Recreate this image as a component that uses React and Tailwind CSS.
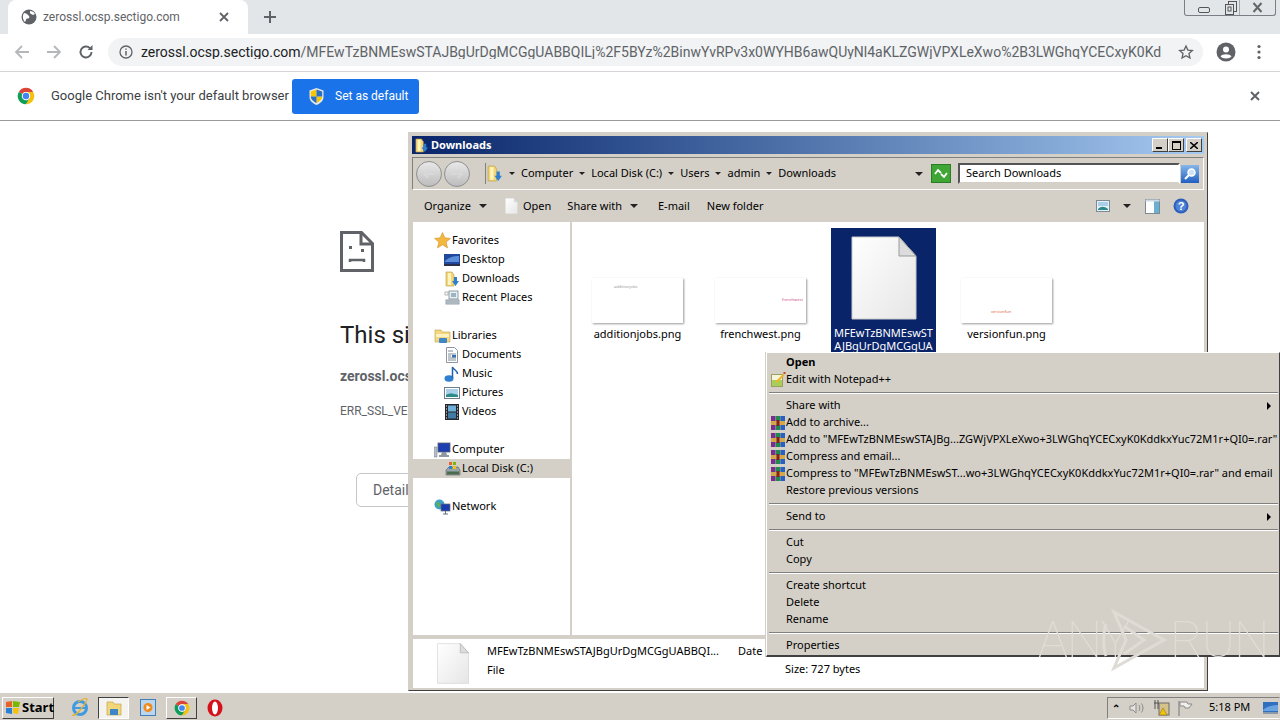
import React from "react";

const Folder = ({ size = 16 }) => (
  <svg width={size} height={size} viewBox="0 0 16 16" className="shrink-0">
    <path d="M2 1h6l2 3v11H2z" fill="#f3d677" stroke="#b89a3c" strokeWidth=".6" />
    <path d="M4 2h3v12H4z" fill="#fff3bf" />
    <path d="M10 6h3v4h2l-3.5 5L8 10h2z" fill="#2f7fd0" />
  </svg>
);
const Star = () => (
  <svg width="17" height="17" viewBox="0 0 16 16" className="shrink-0">
    <path d="M8 .5l2.2 5 5.3.5-4 3.5 1.2 5.5L8 12l-4.700 3 1.200-5.500-4-3.500 5.300-.5z" fill="#f4b73f" stroke="#c98a1d" strokeWidth=".5" />
  </svg>
);
const Desktop = () => (
  <svg width="16" height="16" viewBox="0 0 16 16" className="shrink-0">
    <rect x="0" y="2" width="16" height="12" fill="#22489c" />
    <path d="M1 9c4-4 9-5 14-5v6H1z" fill="#5a8ed8" />
    <rect x="0" y="12" width="16" height="2" fill="#2a2f4a" />
  </svg>
);
const Recent = () => (
  <svg width="16" height="16" viewBox="0 0 16 16" className="shrink-0">
    <rect x="5" y="1" width="9" height="8" fill="#e8eef2" stroke="#7b8a96" strokeWidth=".8" />
    <rect x="7" y="3" width="5" height="4" fill="#9db4c4" />
    <rect x="1" y="2" width="3" height="3" fill="#fff" stroke="#8a8a8a" strokeWidth=".6" />
    <rect x="2" y="10" width="13" height="4" fill="#cfd5da" stroke="#7b8a96" strokeWidth=".8" />
    <path d="M3 12h11" stroke="#7b8a96" strokeWidth=".8" />
  </svg>
);
const LibFolder = () => (
  <svg width="17" height="16" viewBox="0 0 17 16" className="shrink-0">
    <path d="M1 2h6l1 2h8v10H1z" fill="#f5d77f" stroke="#bd9f47" strokeWidth=".6" />
    <path d="M2 6h13v3H2z" fill="#fff2c2" />
    <rect x="5" y="10" width="8" height="5" rx="1" fill="#3f86c9" />
  </svg>
);
const Doc = () => (
  <svg width="16" height="16" viewBox="0 0 16 16" className="shrink-0">
    <path d="M2.500.5h8l3 3v12h-11z" fill="#fff" stroke="#8d96a0" />
    <path d="M4 4h5M4 7h8M4 9h3M4 11h8M4 13h8" stroke="#7d8b99" />
    <rect x="8" y="8" width="4" height="2.500" fill="#3a70b0" />
  </svg>
);
const Music = () => (
  <svg width="16" height="16" viewBox="0 0 16 16" className="shrink-0">
    <ellipse cx="5" cy="12.500" rx="4.500" ry="3.300" fill="#2f7fd0" />
    <path d="M8.500 12V1c1 3 5 3 5 7" fill="none" stroke="#1f63ae" strokeWidth="1.500" />
  </svg>
);
const Pictures = () => (
  <svg width="16" height="16" viewBox="0 0 16 16" className="shrink-0">
    <rect x=".5" y="2.500" width="15" height="11" fill="#fff" stroke="#6f7c89" />
    <rect x="2" y="4" width="12" height="8" fill="#a9d0e8" />
    <path d="M2 10c3-2 6-2 12 0v2H2z" fill="#2d8a8a" />
  </svg>
);
const Videos = () => (
  <svg width="16" height="16" viewBox="0 0 16 16" className="shrink-0">
    <rect x="1" y="0" width="14" height="16" fill="#24282e" />
    <rect x="4" y="1.500" width="8" height="6" fill="#6fb0d8" />
    <rect x="4" y="8.500" width="8" height="6" fill="#3f7ba3" />
    <path d="M2 2h1M2 5h1M2 8h1M2 11h1M2 14h1M13 2h1M13 5h1M13 8h1M13 11h1M13 14h1" stroke="#fff" />
  </svg>
);
const Computer = () => (
  <svg width="17" height="16" viewBox="0 0 17 16" className="shrink-0">
    <rect x="0" y="5" width="3" height="10" fill="#b7c0c8" stroke="#6e7882" strokeWidth=".5" />
    <rect x="4" y="1" width="12" height="9" fill="#1d3fb0" stroke="#5a6470" strokeWidth=".8" />
    <path d="M8 10h4l1 3H7z" fill="#8b96a0" />
    <path d="M5 14h10" stroke="#6e7882" strokeWidth="1.500" />
  </svg>
);
const Disk = () => (
  <svg width="17" height="16" viewBox="0 0 17 16" className="shrink-0">
    <path d="M2 9l3-3h9l2 3v5H2z" fill="#97a5a8" stroke="#505c60" strokeWidth=".6" />
    <rect x="3" y="10.500" width="12" height="3" fill="#4e6a4e" />
    <rect x="5" y="1" width="3" height="3" fill="#e8622a" />
    <rect x="9" y="1" width="3" height="3" fill="#7ab800" />
    <rect x="5" y="5" width="3" height="3" fill="#2c7fd6" />
    <rect x="9" y="5" width="3" height="3" fill="#f4c20d" />
  </svg>
);
const Network = () => (
  <svg width="17" height="16" viewBox="0 0 17 16" className="shrink-0">
    <circle cx="5.500" cy="5.500" r="5" fill="#3da0c8" />
    <path d="M2 3c2 1 3 0 4 2s-2 3-2 4" fill="#67b04a" />
    <rect x="7" y="5" width="9" height="7" fill="#1b3cb0" stroke="#66707a" strokeWidth=".7" />
    <path d="M11.500 12v3M9 15h5" stroke="#66707a" />
  </svg>
);
const Rar = () => (
  <svg width="14" height="14" viewBox="0 0 14 14" className="shrink-0">
    <rect x="0" y="0" width="4.500" height="14" fill="#7b2d8f" />
    <rect x="4.700" y="0" width="4.500" height="14" fill="#1f8a4c" />
    <rect x="9.400" y="0" width="4.600" height="14" fill="#2a5fc0" />
    <rect x="0" y="5" width="14" height="4" fill="#d2a94a" />
    <rect x="5.500" y="4" width="3" height="6" fill="#8b1f1f" />
  </svg>
);
const Note = () => (
  <svg width="15" height="15" viewBox="0 0 15 15" className="shrink-0">
    <rect x=".5" y="2.500" width="11" height="12" fill="#f3f6d8" stroke="#9aa060" />
    <rect x="1" y="8" width="10" height="6" fill="#a9cf5a" />
    <path d="M5 9l7-7 1.500 1.500-7 7H5z" fill="#f0b429" />
    <path d="M12.500 0h2v2h-2z" fill="#c04a1a" />
  </svg>
);
const PageIcon = ({ w, h, className = "" }) => (
  <svg width={w} height={h} viewBox="0 0 66 84" className={"shrink-0 " + className}>
    <defs>
      <linearGradient id="pageg" x1="0" y1="0" x2="1" y2="1">
        <stop offset="0" stopColor="#ffffff" />
        <stop offset="1" stopColor="#e6e6e6" />
      </linearGradient>
    </defs>
    <path d="M1 1h47l17 19v63H1z" fill="url(#pageg)" stroke="#c8c8c8" strokeWidth="1" />
    <path d="M48 1v19h17z" fill="#dcdcdc" stroke="#9b9b9b" strokeWidth="1" />
  </svg>
);

const NavRow = ({ icon, label, child, selected }) => (
  <div className={"h-[19px] flex items-center " + (child ? "pl-[29px] " : "pl-[19px] ") + (selected ? "bg-[#d4d0c8]" : "")}>
    <span className={"flex justify-center " + (child ? "w-[20px]" : "w-[20px]")}>{icon}</span>
    <span className={child ? "ml-0" : "ml-0"}>{label}</span>
  </div>
);

const Caret = ({ className = "" }) => (
  <span className={"inline-block w-0 h-0 border-l-[4px] border-r-[4px] border-t-[4px] border-l-transparent border-r-transparent border-t-[#222] " + className} />
);
const MiniCaret = () => <span className="inline-block w-0 h-0 mx-[6px] border-l-[3px] border-r-[3px] border-t-[3px] border-l-transparent border-r-transparent border-t-[#222]" />;

const Thumb = ({ text, color, cls }) => (
  <div className={"w-[91px] h-[45px] bg-white shadow-[1px_1px_2px_#9a9a9a] text-[4px] leading-[5px] whitespace-nowrap " + cls} style={{ color }}>
    {text}
  </div>
);

const Tile = ({ name, children }) => (
  <div className="w-[105px] flex flex-col items-center">
    <div className="h-[95px] flex items-end justify-center">{children}</div>
    <div className="mt-[4px] h-[13px] leading-[13px] text-center whitespace-nowrap">{name}</div>
  </div>
);

const MenuItem = ({ icon, label, bold, arrow }) => (
  <div className={"h-[17px] flex items-center relative " + (bold ? "font-bold" : "")}>
    <span className="w-[18px] pl-[3px] flex items-center shrink-0">{icon}</span>
    <span className="whitespace-nowrap">{label}</span>
    {arrow && (
      <span className="ml-auto mr-[8px] w-0 h-0 border-t-[4px] border-b-[4px] border-l-[4px] border-t-transparent border-b-transparent border-l-black" />
    )}
  </div>
);
const MenuSep = () => (
  <div className="h-[9px] flex flex-col justify-center px-[1px]">
    <div className="h-px bg-[#808080]" />
    <div className="h-px bg-white" />
  </div>
);

const Cell = ({ children, cls = "" }) => <span className={"flex items-center justify-center " + cls}>{children}</span>;

export default function App() {
  return (
    <div className="relative w-[1280px] h-[720px] overflow-hidden bg-white flex flex-col font-['Roboto',sans-serif] text-[#202124]">
      {/* Tab strip */}
      <div className="h-[34px] bg-[#e3e6e9] flex items-end pl-[8px] shrink-0 relative">
        <div className="w-[240px] h-[34px] bg-white rounded-t-[8px] flex items-center pl-[13px] pr-[10px]">
          <svg width="16" height="16" viewBox="0 0 16 16" className="shrink-0">
            <circle cx="8" cy="8" r="7.500" fill="#5f6368" />
            <path d="M3 4c2 0 3 1 4 2s2 2 1 3-3 0-3 2l-1 2C2 11 1 7 3 4zM9 2c2 0 4 1 5 3l-2 1c-1-1-3-1-3-2z" fill="#fff" />
          </svg>
          <span className="ml-[6px] text-[12px] leading-none text-[#5f6368] whitespace-nowrap w-[172px]">zerossl.ocsp.sectigo.com</span>
          <svg width="12" height="12" viewBox="0 0 12 12" className="ml-[3px]"><path d="M2 2l8 8M10 2l-8 8" stroke="#5f6368" strokeWidth="1.800" /></svg>
        </div>
        <svg width="14" height="14" viewBox="0 0 14 14" className="ml-[15px] mb-[10px]"><path d="M7 1v12M1 7h12" stroke="#5f6368" strokeWidth="2" /></svg>
        <div className="absolute right-[4px] top-0 w-[92px] h-[16px] border border-t-0 border-[#7b7f85] rounded-b-[3px] flex">
          <Cell cls="w-[37px]"><span className="w-[12px] h-[6px] rounded-[2px] border border-[#555] mt-[4px]" /></Cell>
          <Cell cls="w-[17px]">
            <svg width="12" height="14" viewBox="0 0 12 14"><rect x="3.500" y=".5" width="8" height="10" fill="none" stroke="#555" /><rect x=".5" y="3.500" width="8" height="10" fill="#e3e6e9" stroke="#555" /><rect x="3" y="6" width="3" height="4" fill="none" stroke="#555" /></svg>
          </Cell>
          <Cell cls="flex-1 border-l border-[#a8abaf]">
            <svg width="11" height="11" viewBox="0 0 11 11"><path d="M1.500 1l8 9M9.500 1l-8 9" stroke="#666" strokeWidth="2" fill="none" /></svg>
          </Cell>
        </div>
      </div>
      {/* Toolbar */}
      <div className="h-[38px] bg-white border-b border-[#d5d6d8] flex items-center shrink-0 pb-[1px]">
        <div className="w-[108px] flex items-center pl-[14px] gap-[16px] shrink-0">
          <svg width="16" height="16" viewBox="0 0 16 16"><path d="M15 8H2M8 2L2 8l6 6" fill="none" stroke="#b5b8bb" strokeWidth="1.800" /></svg>
          <svg width="16" height="16" viewBox="0 0 16 16"><path d="M1 8h13M8 2l6 6-6 6" fill="none" stroke="#b5b8bb" strokeWidth="1.800" /></svg>
          <svg width="16" height="16" viewBox="0 0 16 16"><path d="M13.500 8a5.500 5.500 0 1 1-1.600-3.900" fill="none" stroke="#5f6368" strokeWidth="1.900" /><path d="M14.500 1v5h-5z" fill="#5f6368" /></svg>
        </div>
        <div className="w-[1095px] h-[28px] rounded-full bg-[#f1f3f4] flex items-center pl-[11px] pr-[9px] shrink-0">
          <svg width="14" height="14" viewBox="0 0 14 14" className="shrink-0"><circle cx="7" cy="7" r="6" fill="none" stroke="#5f6368" strokeWidth="1.300" /><path d="M7 6v4.500M7 3.500v1.300" stroke="#5f6368" strokeWidth="1.500" /></svg>
          <span className="ml-[8px] text-[14px] whitespace-nowrap w-[1020px] overflow-hidden leading-none">
            zerossl.ocsp.sectigo.com<span className="text-[#5f6368]">/MFEwTzBNMEswSTAJBgUrDgMCGgUABBQILj%2F5BYz%2BinwYvRPv3x0WYHB6awQUyNl4aKLZGWjVPXLeXwo%2B3LWGhqYCECxyK0Kdd...</span>
          </span>
          <svg width="16" height="16" viewBox="0 0 24 24" className="ml-auto shrink-0"><path d="M12 3l2.800 6.200 6.700.7-5 4.500 1.400 6.600L12 17.600 6.100 21l1.400-6.600-5-4.500 6.700-.7z" fill="none" stroke="#5f6368" strokeWidth="2" /></svg>
        </div>
        <svg width="20" height="20" viewBox="0 0 20 20" className="ml-[13px] shrink-0"><circle cx="10" cy="10" r="9.500" fill="#5f6368" /><circle cx="10" cy="7.500" r="3" fill="#fff" /><path d="M4.500 14.500c1.500-3 9.500-3 11 0-2 2.500-9 2.500-11 0z" fill="#fff" /></svg>
        <svg width="4" height="16" viewBox="0 0 4 16" className="ml-[21px] shrink-0"><circle cx="2" cy="2.500" r="1.600" fill="#5f6368" /><circle cx="2" cy="8" r="1.600" fill="#5f6368" /><circle cx="2" cy="13.500" r="1.600" fill="#5f6368" /></svg>
      </div>
      {/* Infobar */}
      <div className="h-[49px] bg-white border-b border-[#9a9a9a] shadow-[0_1px_2px_#cfcfcf] flex items-center pl-[17px] shrink-0">
        <svg width="18" height="18" viewBox="0 0 24 24" className="shrink-0">
          <path d="M12 1a11 11 0 0 1 9.530 5.500H12a5.500 5.500 0 0 0-4.760 2.750L2.470 6.500A11 11 0 0 1 12 1z" fill="#db4437" />
          <path d="M21.530 6.500A11 11 0 0 1 12 23l4.760-8.250A5.500 5.500 0 0 0 12 6.500z" fill="#f4c20d" />
          <path d="M2.470 6.500A11 11 0 0 0 12 23l4.760-8.250a5.500 5.500 0 0 1-9.520-5.500z" fill="#0f9d58" />
          <circle cx="12" cy="12" r="5.500" fill="#fff" /><circle cx="12" cy="12" r="4.300" fill="#4285f4" />
        </svg>
        <span className="ml-[16px] text-[13px] text-[#3c4043] whitespace-nowrap w-[241px]">Google Chrome isn't your default browser</span>
        <div className="w-[127px] h-[35px] bg-[#1a73e8] rounded-[3px] flex items-center pl-[17px] text-white text-[12px] shrink-0">
          <svg width="15" height="17" viewBox="0 0 15 17" className="shrink-0">
            <path d="M7.500 0L14.500 2.500V9c0 4-3.500 6.500-7 8-3.500-1.500-7-4-7-8V2.500z" fill="#e8e8e8" />
            <path d="M7.500 1.500v7H1.800V3.500zM7.500 8.500h5.700c0 3-2.700 5-5.700 6.500z" fill="#f6c700" />
            <path d="M7.500 1.500l5.700 2v5H7.500zM7.500 8.500V15c-3-1.500-5.700-3.500-5.700-6.500z" fill="#2a6fc4" />
          </svg>
          <span className="ml-[11px]">Set as default</span>
        </div>
        <svg width="10" height="10" viewBox="0 0 10 10" className="ml-auto mr-[20px]"><path d="M1 1l8 8M9 1L1 9" stroke="#5f6368" strokeWidth="2" /></svg>
      </div>
      {/* Error page */}
      <div className="flex-1 pl-[340px] pt-[110px] bg-white min-h-0">
        <svg width="34" height="41" viewBox="0 0 34 41" className="block">
          <path d="M1.500 1.500h20l11 11v27h-31z" fill="none" stroke="#5f6368" strokeWidth="3" />
          <path d="M21 2v11h11" fill="none" stroke="#5f6368" strokeWidth="3" />
          <path d="M9 15h3v3H9zM21 18h3v3h-3z" fill="#5f6368" />
          <path d="M10 31v-2h14v2" fill="none" stroke="#5f6368" strokeWidth="2.500" />
        </svg>
        <div className="mt-[47px] text-[24px] leading-[32px] text-[#202124] whitespace-nowrap">This site can't provide a secure connection</div>
        <div className="mt-[15px] text-[14px] leading-[20px] font-bold text-[#5f6368] whitespace-nowrap">zerossl.ocsp.sectigo.com</div>
        <div className="mt-[17px] text-[12px] leading-[16px] text-[#5f6368] whitespace-nowrap">ERR_SSL_VERSION_OR_CIPHER_MISMATCH</div>
        <div className="mt-[54px] ml-[16px] w-[100px] h-[34px] border border-[#c4c7c9] rounded-[5px] flex items-center pl-[16px] text-[14px] text-[#5f6368]">Details</div>
      </div>
      {/* Taskbar */}
      <div className="h-[28px] bg-[#d4d0c8] border-t border-white flex items-center shrink-0 text-[11px] text-black font-['Noto_Sans',sans-serif]">
        <div className="ml-[2px] w-[52px] h-[22px] mt-[2px] border border-[#fff] border-r-[#404040] border-b-[#404040] flex items-center pl-[2px] font-bold text-[13px] shrink-0">
          <svg width="16" height="15" viewBox="0 0 16 15" className="shrink-0">
            <path d="M1 2l6-1v6H1z" fill="#e8622a" /><path d="M8 1l7 1-1 5H8z" fill="#7ab800" /><path d="M1 8h6v6l-6-1z" fill="#2c7fd6" /><path d="M8 8h6l-1 6-5-1z" fill="#f4c20d" />
          </svg>
          <span className="ml-px">Start</span>
        </div>
        <svg width="18" height="19" viewBox="0 0 18 19" className="ml-[17px] mt-[2px] shrink-0">
          <circle cx="9" cy="10" r="6.500" fill="none" stroke="#3f9ae0" strokeWidth="3" />
          <path d="M4 10h10" stroke="#3f9ae0" strokeWidth="2" /><path d="M1 17c2 1 6-2 9-6s7-9 6-10-5 0-9 3" fill="none" stroke="#e4b23a" strokeWidth="1.300" />
        </svg>
        <div className="ml-[9px] w-[31px] h-[22px] mt-[2px] bg-[#f4f3f0] border border-[#404040] border-r-white border-b-white flex items-center justify-center shrink-0">
          <svg width="16" height="16" viewBox="0 0 16 16"><path d="M1 2h6l1 2h7v11H1z" fill="#f3d677" stroke="#b89a3c" strokeWidth=".6" /><rect x="4" y="9" width="8" height="6" fill="#3f86c9" /></svg>
        </div>
        <svg width="16" height="17" viewBox="0 0 16 17" className="ml-[11px] mt-[2px] shrink-0">
          <rect x=".5" y=".5" width="15" height="16" fill="#bcd5ea" stroke="#3f7fbb" /><circle cx="8" cy="8.500" r="4.500" fill="#f08a1d" /><path d="M6.500 6l4 2.500-4 2.500z" fill="#fff" />
        </svg>
        <div className="ml-[10px] w-[31px] h-[22px] mt-[2px] border border-white border-r-[#404040] border-b-[#404040] flex items-center justify-center shrink-0">
          <svg width="16" height="16" viewBox="0 0 24 24">
            <path d="M12 1a11 11 0 0 1 9.530 5.500H12a5.500 5.500 0 0 0-4.760 2.750L2.470 6.500A11 11 0 0 1 12 1z" fill="#db4437" />
            <path d="M21.530 6.500A11 11 0 0 1 12 23l4.760-8.250A5.500 5.500 0 0 0 12 6.500z" fill="#f4c20d" />
            <path d="M2.470 6.500A11 11 0 0 0 12 23l4.760-8.250a5.500 5.500 0 0 1-9.520-5.500z" fill="#0f9d58" />
            <circle cx="12" cy="12" r="5.500" fill="#fff" /><circle cx="12" cy="12" r="4.300" fill="#4285f4" />
          </svg>
        </div>
        <svg width="16" height="18" viewBox="0 0 16 18" className="ml-[10px] mt-[2px] shrink-0">
          <ellipse cx="8" cy="9" rx="7.500" ry="8.500" fill="#d3121b" /><ellipse cx="8" cy="9" rx="3" ry="6.500" fill="#fff" />
        </svg>
        <div className="ml-auto w-[173px] h-[22px] mt-[2px] border border-[#808080] border-r-transparent border-b-white flex items-center shrink-0">
          <span className="ml-[3px] w-[10px] text-[10px] leading-none font-bold text-center">⌃</span>
          <svg width="16" height="14" viewBox="0 0 16 14" className="ml-[8px]"><path d="M1 5h3l3-3v10L4 9H1z" fill="#e6e4df" stroke="#8a8a8a" /><path d="M10 4c1 2 1 4 0 6M12.500 2.500c2 3 2 6 0 9" fill="none" stroke="#8a8a8a" /></svg>
          <svg width="17" height="17" viewBox="0 0 17 17" className="ml-[8px]"><rect x="6" y="4" width="10" height="12" fill="#d4c28a" stroke="#6a6a6a" /><path d="M2 1v9M5 1v9M1 4h5" stroke="#555" fill="none" /><path d="M10 9l4 7H6z" fill="#f4c20d" stroke="#7a6a10" strokeWidth=".5" /></svg>
          <svg width="16" height="16" viewBox="0 0 16 16" className="ml-[7px]"><path d="M2 1v15" stroke="#8a8a8a" strokeWidth="1.300" /><path d="M3 2h7l1 2h4l-3 4H8L7 6H3z" fill="#efeee9" stroke="#8a8a8a" /></svg>
          <span className="ml-[16px] whitespace-nowrap">5:18 PM</span>
          <svg width="15" height="12" viewBox="0 0 15 12" className="ml-[13px]"><rect width="15" height="12" fill="#2f6fc0" /><path d="M0 8c5-4 10-5 15-5v6H0z" fill="#6aa3e0" /><rect y="10" width="15" height="2" fill="#8a99aa" /></svg>
        </div>
      </div>

      {/* Explorer window */}
      <div className="absolute left-[408px] top-[132px] w-[800px] h-[559px] bg-[#d4d0c8] border border-[#d4d0c8] border-r-[#404040] border-b-[#404040] pt-[3px] px-[3px] pb-[2px] flex flex-col text-[11px] text-black font-['Noto_Sans',sans-serif]">
        <div className="h-[18px] bg-gradient-to-r from-[#0a246a] to-[#a6caf0] flex items-center pl-[2px] pr-[2px] shrink-0">
          <Folder size={15} />
          <span className="ml-[2px] text-white font-bold">Downloads</span>
          <div className="ml-auto flex">
            {["min", "max"].map((k) => (
              <span key={k} className="w-[16px] h-[14px] bg-[#d4d0c8] border border-white border-r-[#404040] border-b-[#404040] flex items-center justify-center">
                {k === "min" ? <span className="w-[6px] h-[2px] bg-black mt-[6px] mr-[2px]" /> : <span className="w-[9px] h-[9px] border border-black border-t-2" />}
              </span>
            ))}
            <span className="ml-[2px] w-[16px] h-[14px] bg-[#d4d0c8] border border-white border-r-[#404040] border-b-[#404040] flex items-center justify-center">
              <svg width="8" height="7" viewBox="0 0 8 7"><path d="M0 0l8 7M8 0L0 7" stroke="#000" strokeWidth="1.500" /></svg>
            </span>
          </div>
        </div>
        {/* Address row */}
        <div className="h-[36px] pt-[3px] shrink-0">
          <div className="h-[33px] border border-[#808080] border-r-white border-b-white flex items-center pl-[3px]">
            <span className="w-[26px] h-[26px] rounded-full border border-[#8f8f8f] bg-gradient-to-b from-[#e8e8e8] to-[#bdbdbd] flex items-center justify-center shrink-0">
              <svg width="14" height="10" viewBox="0 0 14 10"><path d="M13 5H2M6 1L2 5l4 4" fill="none" stroke="#d8d8d8" strokeWidth="2" /></svg>
            </span>
            <span className="ml-[2px] w-[26px] h-[26px] rounded-full border border-[#8f8f8f] bg-gradient-to-b from-[#e8e8e8] to-[#bdbdbd] flex items-center justify-center shrink-0">
              <svg width="14" height="10" viewBox="0 0 14 10"><path d="M1 5h11M8 1l4 4-4 4" fill="none" stroke="#d8d8d8" strokeWidth="2" /></svg>
            </span>
            <div className="ml-[15px] w-[441px] h-[21px] border-l border-[#808080] flex items-center shrink-0 whitespace-nowrap">
              <Folder size={17} />
              <MiniCaret />
              <span>Computer</span><MiniCaret />
              <span>Local Disk (C:)</span><MiniCaret />
              <span>Users</span><MiniCaret />
              <span>admin</span><MiniCaret />
              <span>Downloads</span>
              <Caret className="ml-auto mr-[3px]" />
            </div>
            <span className="ml-[5px] w-[20px] h-[19px] bg-[#3fa535] border border-[#2b7c25] flex items-center justify-center shrink-0">
              <svg width="14" height="11" viewBox="0 0 14 11"><path d="M1 6l3-4 3 3M13 5l-3 4-3-3" fill="none" stroke="#fff" strokeWidth="1.800" /></svg>
            </span>
            <div className="ml-[7px] w-[222px] h-[21px] bg-white border-2 border-[#555] border-r-white border-b-[#d4d0c8] flex items-center pl-[6px] shrink-0">Search Downloads</div>
            <span className="w-[20px] h-[20px] bg-gradient-to-b from-[#86b7ea] to-[#1f5dc0] flex items-center justify-center shrink-0 border border-[#d4d0c8]">
              <svg width="14" height="14" viewBox="0 0 14 14"><circle cx="8.500" cy="5.500" r="3.500" fill="#cfe3f7" stroke="#fff" strokeWidth="1.500" /><path d="M6 8l-4 4" stroke="#fff" strokeWidth="2" /></svg>
            </span>
          </div>
        </div>
        {/* Toolbar */}
        <div className="h-[32px] flex items-center pl-[12px] shrink-0 whitespace-nowrap">
          <span>Organize</span>
          <Caret className="ml-[8px]" />
          <span className="ml-[18px] w-[13px] flex"><PageIcon w={13} h={16} /></span>
          <span className="ml-[5px]">Open</span>
          <span className="ml-[16px]">Share with</span>
          <Caret className="ml-[8px]" />
          <span className="ml-[20px]">E-mail</span>
          <span className="ml-[17px]">New folder</span>
          <svg width="14" height="12" viewBox="0 0 14 12" className="ml-auto"><rect x=".5" y=".5" width="13" height="11" fill="#e8f0f6" stroke="#7c8a96" /><path d="M2 9c3-3 6-3 10 0v1H2z" fill="#2d8a8a" /><rect x="2" y="2" width="10" height="4" fill="#a9d0e8" /></svg>
          <Caret className="ml-[13px]" />
          <svg width="15" height="15" viewBox="0 0 15 15" className="ml-[14px]"><rect x=".5" y=".5" width="14" height="14" fill="#fff" stroke="#7c8a96" /><rect x="9" y="1" width="5" height="13" fill="#6bb0d0" /><rect x=".5" y=".5" width="14" height="2" fill="#cfd9e2" /></svg>
          <svg width="16" height="16" viewBox="0 0 16 16" className="ml-[13px] mr-[15px]"><circle cx="8" cy="8" r="7.500" fill="#2c5fb8" /><circle cx="8" cy="8" r="5.500" fill="#4d82d8" /><text x="8" y="12" textAnchor="middle" fontSize="11" fontWeight="700" fill="#fff" fontFamily="Liberation Sans">?</text></svg>
        </div>
        {/* Body */}
        <div className="h-[413px] flex shrink-0">
          <div className="ml-[1px] w-[157px] bg-white pt-[9px] shrink-0 whitespace-nowrap">
            <NavRow icon={<Star />} label="Favorites" />
            <NavRow child icon={<Desktop />} label="Desktop" />
            <NavRow child icon={<Folder />} label="Downloads" />
            <NavRow child icon={<Recent />} label="Recent Places" />
            <div className="h-[19px]" />
            <NavRow icon={<LibFolder />} label="Libraries" />
            <NavRow child icon={<Doc />} label="Documents" />
            <NavRow child icon={<Music />} label="Music" />
            <NavRow child icon={<Pictures />} label="Pictures" />
            <NavRow child icon={<Videos />} label="Videos" />
            <div className="h-[19px]" />
            <NavRow icon={<Computer />} label="Computer" />
            <NavRow child selected icon={<Disk />} label="Local Disk (C:)" />
            <div className="h-[19px]" />
            <NavRow icon={<Network />} label="Network" />
          </div>
          <div className="ml-[2px] flex-1 bg-white pl-[13px] pt-[6px] flex gap-[18px] items-start overflow-hidden">
            <Tile name="additionjobs.png"><Thumb text="additionjobs" color="#999" cls="pl-[22px] pt-[6px]" /></Tile>
            <Tile name="frenchwest.png"><Thumb text="frenchwest" color="#d0508a" cls="pl-[67px] pt-[19px]" /></Tile>
            <div className="w-[105px] h-[140px] bg-[#0a246a] flex flex-col items-center text-white pt-[8px] shrink-0">
              <PageIcon w={66} h={84} />
              <div className="mt-[6px] text-center leading-[13px]">MFEwTzBNMEswST<br />AJBgUrDgMCGgUA</div>
            </div>
            <Tile name="versionfun.png"><Thumb text="versionfun" color="#e0663a" cls="pl-[30px] pt-[31px]" /></Tile>
          </div>
        </div>
        <div className="h-[4px] shrink-0" />
        {/* Details */}
        <div className="h-[49px] bg-white flex shrink-0 ml-[1px]">
          <div className="w-[74px] pl-[24px] pt-[4px] shrink-0"><PageIcon w={32} h={41} /></div>
          <div className="flex flex-col w-[298px] shrink-0 whitespace-nowrap">
            <div className="h-[19px] mt-[3px] flex items-center"><span className="w-[251px] overflow-hidden">MFEwTzBNMEswSTAJBgUrDgMCGgUABBQI...</span><span>Date</span></div>
            <div className="h-[19px] flex items-center">File</div>
          </div>
          <div className="pt-[22px] whitespace-nowrap">Size: 727 bytes</div>
        </div>
      </div>

      {/* Context menu */}
      <div className="absolute left-[766px] top-[352px] w-[514px] h-[305px] bg-[#d4d0c8] border border-white border-r-[#404040] border-b-[#404040] border-b-2 pt-px pl-px text-[11px] text-black font-['Noto_Sans',sans-serif] shadow-[-1px_0_0_#d4d0c8]">
        <MenuItem label="Open" bold />
        <MenuItem icon={<Note />} label="Edit with Notepad++" />
        <MenuSep />
        <MenuItem label="Share with" arrow />
        <MenuItem icon={<Rar />} label="Add to archive..." />
        <MenuItem icon={<Rar />} label={'Add to "MFEwTzBNMEswSTAJBg...ZGWjVPXLeXwo+3LWGhqYCECxyK0KddkxYuc72M1r+QI0=.rar"'} />
        <MenuItem icon={<Rar />} label="Compress and email..." />
        <MenuItem icon={<Rar />} label={'Compress to "MFEwTzBNMEswST...wo+3LWGhqYCECxyK0KddkxYuc72M1r+QI0=.rar" and email'} />
        <MenuItem label="Restore previous versions" />
        <MenuSep />
        <MenuItem label="Send to" arrow />
        <MenuSep />
        <MenuItem label="Cut" />
        <MenuItem label="Copy" />
        <MenuSep />
        <MenuItem label="Create shortcut" />
        <MenuItem label="Delete" />
        <MenuItem label="Rename" />
        <MenuSep />
        <MenuItem label="Properties" />
      </div>

      {/* Watermark */}
      <div className="absolute left-[1038px] top-[608px] h-[64px] flex items-center font-['Roboto',sans-serif] font-thin text-[50px] leading-none text-[#dfdcd6] pointer-events-none">
        <span className="w-[60px] tracking-[-1px]">ANY</span>
        <svg width="72" height="64" viewBox="0 0 72 64" className="shrink-0">
          <path d="M8 16c-3 8-3 24 0 32" fill="none" stroke="#dfdcd6" strokeWidth="3" />
          <path d="M16 4l50 28-50 28 12-28zM26 18l20 14-20 14" fill="none" stroke="#dfdcd6" strokeWidth="3" />
        </svg>
        <span className="tracking-[-1px]">RUN</span>
      </div>
    </div>
  );
}
